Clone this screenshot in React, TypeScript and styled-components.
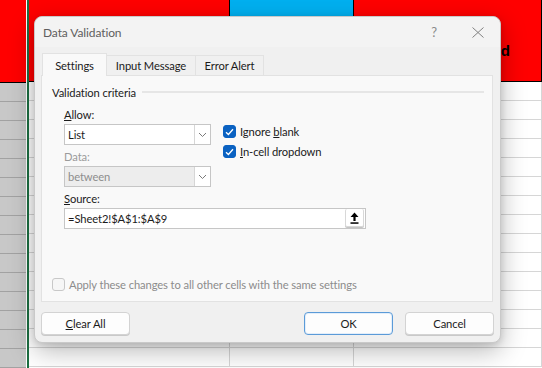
import React from "react";
import styled, {createGlobalStyle} from "styled-components";

const GlobalStyle = createGlobalStyle`
  html, body {
    margin: 0;
    padding: 0;
  }
  body {
    width: 542px;
    height: 368px;
    overflow: hidden;
    font-family: Lato, "Noto Sans", sans-serif;
    font-size: 11.2px;
    letter-spacing: -0.1px;
    color: #1b1b1b;
  }
`;

const ROWS = 15;

const Sheet = styled.div`
  position: relative;
  display: flex;
  width: 542px;
  height: 368px;
  overflow: hidden;
  background: #ffffff;
`;

const RowHeaders = styled.div`
  display: flex;
  flex-direction: column;
  width: 26px;
  flex-shrink: 0;
  background: #c8c8c8;
`;

const Corner = styled.div`
  height: 82px;
  flex-shrink: 0;
  background: #ff0000;
  border-bottom: 1px solid #000;
`;

const RowHead = styled.div`
  height: 18px;
  flex-shrink: 0;
  border-bottom: 1px solid #a2a2a2;
`;

const SelectionEdge = styled.div`
  width: 3px;
  flex-shrink: 0;
  background: linear-gradient(to right, #ffffff 1px, #1d6f42 1px);
`;

const Column = styled.div<{ $width?: number }>`
  display: flex;
  flex-direction: column;
  flex: ${p => (p.$width ? `0 0 ${p.$width}px` : "1 1 auto")};
`;

const HeaderCell = styled.div<{ $bg: string }>`
  display: flex;
  align-items: flex-end;
  justify-content: flex-end;
  height: 82px;
  flex-shrink: 0;
  padding: 0 31px 22px 0;
  box-sizing: border-box;
  background: ${p => p.$bg};
  border-bottom: 1px solid #000;
  border-right: 1px solid #000;
  font-family: "Liberation Sans", Arial, sans-serif;
  font-weight: bold;
  font-size: 15px;
  letter-spacing: 0;
  color: #000;
`;

const Cell = styled.div`
  height: 18px;
  flex-shrink: 0;
  border-bottom: 1px solid #d6d6d6;
  border-right: 1px solid #d6d6d6;
`;

const Dialog = styled.div`
  position: absolute;
  left: 34px;
  top: 16px;
  width: 467px;
  height: 327px;
  box-sizing: border-box;
  display: flex;
  flex-direction: column;
  background: #f0f0f0;
  border: 1px solid #c9c9c9;
  border-radius: 8px;
  box-shadow: 0 8px 26px rgba(0, 0, 0, 0.28), 0 2px 6px rgba(0, 0, 0, 0.12);
`;

const TitleBar = styled.div`
  display: flex;
  align-items: center;
  height: 30px;
  padding-left: 8px;
  background: #f3f3f3;
  border-radius: 8px 8px 0 0;
`;

const Title = styled.div`
  flex: 1;
  font-size: 12px;
  color: #5e5e5e;
`;

const TitleButton = styled.div`
  display: flex;
  align-items: center;
  justify-content: center;
  width: 44px;
  height: 30px;
  font-size: 13px;
  color: #8a8a8a;
`;

const TabStrip = styled.div`
  display: flex;
  align-items: flex-end;
  height: 22px;
  margin: 6px 0 0 7px;
  position: relative;
  z-index: 1;
`;

const Tab = styled.div<{ $active?: boolean; $width: number }>`
  display: flex;
  align-items: center;
  justify-content: center;
  box-sizing: border-box;
  width: ${p => p.$width}px;
  height: ${p => (p.$active ? "23px" : "20px")};
  margin-bottom: ${p => (p.$active ? "-1px" : "0")};
  background: ${p => (p.$active ? "#f9f9f9" : "#f0f0f0")};
  border: 1px solid #e2e2e2;
  border-bottom: none;
  border-left: ${p => (p.$active ? "1px solid #e2e2e2" : "none")};
  color: #1b1b1b;
  white-space: nowrap;
`;

const Panel = styled.div`
  display: flex;
  flex-direction: column;
  box-sizing: border-box;
  width: 452px;
  height: 227px;
  margin-left: 6px;
  padding: 9px 8px 0 10px;
  background: #f9f9f9;
  border: 1px solid #e2e2e2;
`;

const GroupHeading = styled.div`
  display: flex;
  align-items: center;
  gap: 6px;
  height: 14px;
  color: #1b1b1b;

  &::after {
    content: "";
    flex: 1;
    height: 2px;
    background: #e6e6e6;
    margin-top: -1px;
  }
`;

const Criteria = styled.div`
  display: flex;
  flex-direction: column;
  padding-left: 12px;
`;

const CriteriaTop = styled.div`
  display: flex;
  align-items: flex-start;
  gap: 12px;
`;

const FieldColumn = styled.div`
  display: flex;
  flex-direction: column;
`;

const FieldLabel = styled.div<{ $disabled?: boolean; $top: number }>`
  height: 14px;
  line-height: 14px;
  margin: ${p => p.$top}px 0 2px;
  color: ${p => (p.$disabled ? "#9b9b9b" : "#1b1b1b")};
`;

const SelectBox = styled.div<{ $disabled?: boolean }>`
  display: flex;
  align-items: stretch;
  box-sizing: border-box;
  width: 147px;
  height: 21px;
  background: ${p => (p.$disabled ? "#ededed" : "#ffffff")};
  border: 1px solid #c6c6c6;
  color: ${p => (p.$disabled ? "#8e8e8e" : "#1b1b1b")};
`;

const SelectValue = styled.div`
  flex: 1;
  display: flex;
  align-items: center;
  padding-left: 3px;
`;

const DropButton = styled.div`
  display: flex;
  align-items: center;
  justify-content: center;
  width: 15px;
  background: #ffffff;
  border-left: 1px solid #d6d6d6;
`;

const Checks = styled.div`
  display: flex;
  flex-direction: column;
  gap: 7px;
  padding-top: 26px;
`;

const CheckRow = styled.label<{ $disabled?: boolean }>`
  display: flex;
  align-items: center;
  gap: 4px;
  height: 13px;
  color: ${p => (p.$disabled ? "#8c8c8c" : "#1b1b1b")};
  white-space: nowrap;
`;

const CheckBox = styled.span<{ $checked?: boolean }>`
  display: flex;
  align-items: center;
  justify-content: center;
  box-sizing: border-box;
  width: 13px;
  height: 13px;
  border-radius: 3px;
  background: ${p => (p.$checked ? "#0a62c2" : "#f6f6f6")};
  border: 1px solid ${p => (p.$checked ? "#0a62c2" : "#c8c8c8")};
`;

const SourceBox = styled.div`
  display: flex;
  align-items: stretch;
  box-sizing: border-box;
  width: 302px;
  height: 21px;
  background: #ffffff;
  border: 1px solid #c6c6c6;
`;

const SourceValue = styled.div`
  flex: 1;
  display: flex;
  align-items: center;
  padding-left: 3px;
`;

const RefButton = styled.div`
  display: flex;
  align-items: center;
  justify-content: center;
  width: 17px;
  margin: 0 1px 1px 0;
  background: #ffffff;
  border: 1px solid #d8d8d8;
  border-top: none;
  border-radius: 2px;
  box-shadow: 0 1px 0 #c4c4c4;
`;

const ApplyRow = styled.div`
  margin-top: auto;
  margin-bottom: 10px;
`;

const Footer = styled.div`
  display: flex;
  gap: 12px;
  margin: 10px 6px 0 6px;
`;

const Button = styled.div<{ $primary?: boolean }>`
  display: flex;
  align-items: center;
  justify-content: center;
  box-sizing: border-box;
  width: 89px;
  height: 23px;
  background: #fdfdfd;
  border: 1px solid ${p => (p.$primary ? "#5b9bd8" : "#d3d3d3")};
  border-radius: 4px;
  box-shadow: ${p => (p.$primary ? "inset 0 0 0 1px #e3eefa" : "0 1px 0 #c9c9c9")};
  color: #1b1b1b;
`;

const Spacer = styled.div`
  flex: 1;
`;

const Chevron = () => (
  <svg width="9" height="6" viewBox="0 0 9 6">
    <path d="M1 1 L4.5 4.5 L8 1" fill="none" stroke="#7a7a7a" strokeWidth="1"/>
  </svg>
);

const Tick = () => (
  <svg width="9" height="8" viewBox="0 0 9 8">
    <path d="M1 4.2 L3.4 6.5 L8 1.3" fill="none" stroke="#ffffff" strokeWidth="1.3"/>
  </svg>
);

const RefIcon = () => (
  <svg width="9" height="12" viewBox="0 0 9 12">
    <path d="M4.5 0.5 L8.5 5 L5.6 5 L5.6 9 L3.4 9 L3.4 5 L0.5 5 Z" fill="#000"/>
    <rect x="0.5" y="10.3" width="8" height="1.5" fill="#000"/>
  </svg>
);

const CloseIcon = () => (
  <svg width="12" height="11" viewBox="0 0 12 11">
    <path d="M0.5 0.5 L11.5 10.5 M11.5 0.5 L0.5 10.5" fill="none" stroke="#808080" strokeWidth="1"/>
  </svg>
);

const App = () => {
  return (
    <>
      <GlobalStyle/>
      <Sheet>
        <RowHeaders>
          <Corner/>
          {Array.from({length: ROWS}).map((_, i) => <RowHead key={i}/>)}
        </RowHeaders>
        <SelectionEdge/>
        <Column $width={201}>
          <HeaderCell $bg="#ff0000"/>
          {Array.from({length: ROWS}).map((_, i) => <Cell key={i}/>)}
        </Column>
        <Column $width={124}>
          <HeaderCell $bg="#00b0f0"/>
          {Array.from({length: ROWS}).map((_, i) => <Cell key={i}/>)}
        </Column>
        <Column>
          <HeaderCell $bg="#ff0000">Assigned</HeaderCell>
          {Array.from({length: ROWS}).map((_, i) => <Cell key={i}/>)}
        </Column>

        <Dialog>
          <TitleBar>
            <Title>Data Validation</Title>
            <TitleButton>?</TitleButton>
            <TitleButton><CloseIcon/></TitleButton>
          </TitleBar>

          <TabStrip>
            <Tab $active $width={65}>Settings</Tab>
            <Tab $width={89}>Input Message</Tab>
            <Tab $width={68}>Error Alert</Tab>
          </TabStrip>

          <Panel>
            <GroupHeading>Validation criteria</GroupHeading>
            <Criteria>
              <CriteriaTop>
                <FieldColumn>
                  <FieldLabel $top={9}><u>A</u>llow:</FieldLabel>
                  <SelectBox>
                    <SelectValue>List</SelectValue>
                    <DropButton><Chevron/></DropButton>
                  </SelectBox>
                  <FieldLabel $disabled $top={5}>Data:</FieldLabel>
                  <SelectBox $disabled>
                    <SelectValue>between</SelectValue>
                    <DropButton><Chevron/></DropButton>
                  </SelectBox>
                </FieldColumn>
                <Checks>
                  <CheckRow>
                    <CheckBox $checked><Tick/></CheckBox>
                    <span>Ignore <u>b</u>lank</span>
                  </CheckRow>
                  <CheckRow>
                    <CheckBox $checked><Tick/></CheckBox>
                    <span><u>I</u>n-cell dropdown</span>
                  </CheckRow>
                </Checks>
              </CriteriaTop>
              <FieldLabel $top={5}><u>S</u>ource:</FieldLabel>
              <SourceBox>
                <SourceValue>=Sheet2!$A$1:$A$9</SourceValue>
                <RefButton><RefIcon/></RefButton>
              </SourceBox>
            </Criteria>
            <ApplyRow>
              <CheckRow $disabled>
                <CheckBox/>
                <span>Apply these changes to all other cells with the same settings</span>
              </CheckRow>
            </ApplyRow>
          </Panel>

          <Footer>
            <Button><span><u>C</u>lear All</span></Button>
            <Spacer/>
            <Button $primary>OK</Button>
            <Button>Cancel</Button>
          </Footer>
        </Dialog>
      </Sheet>
    </>
  );
};

export default App;
